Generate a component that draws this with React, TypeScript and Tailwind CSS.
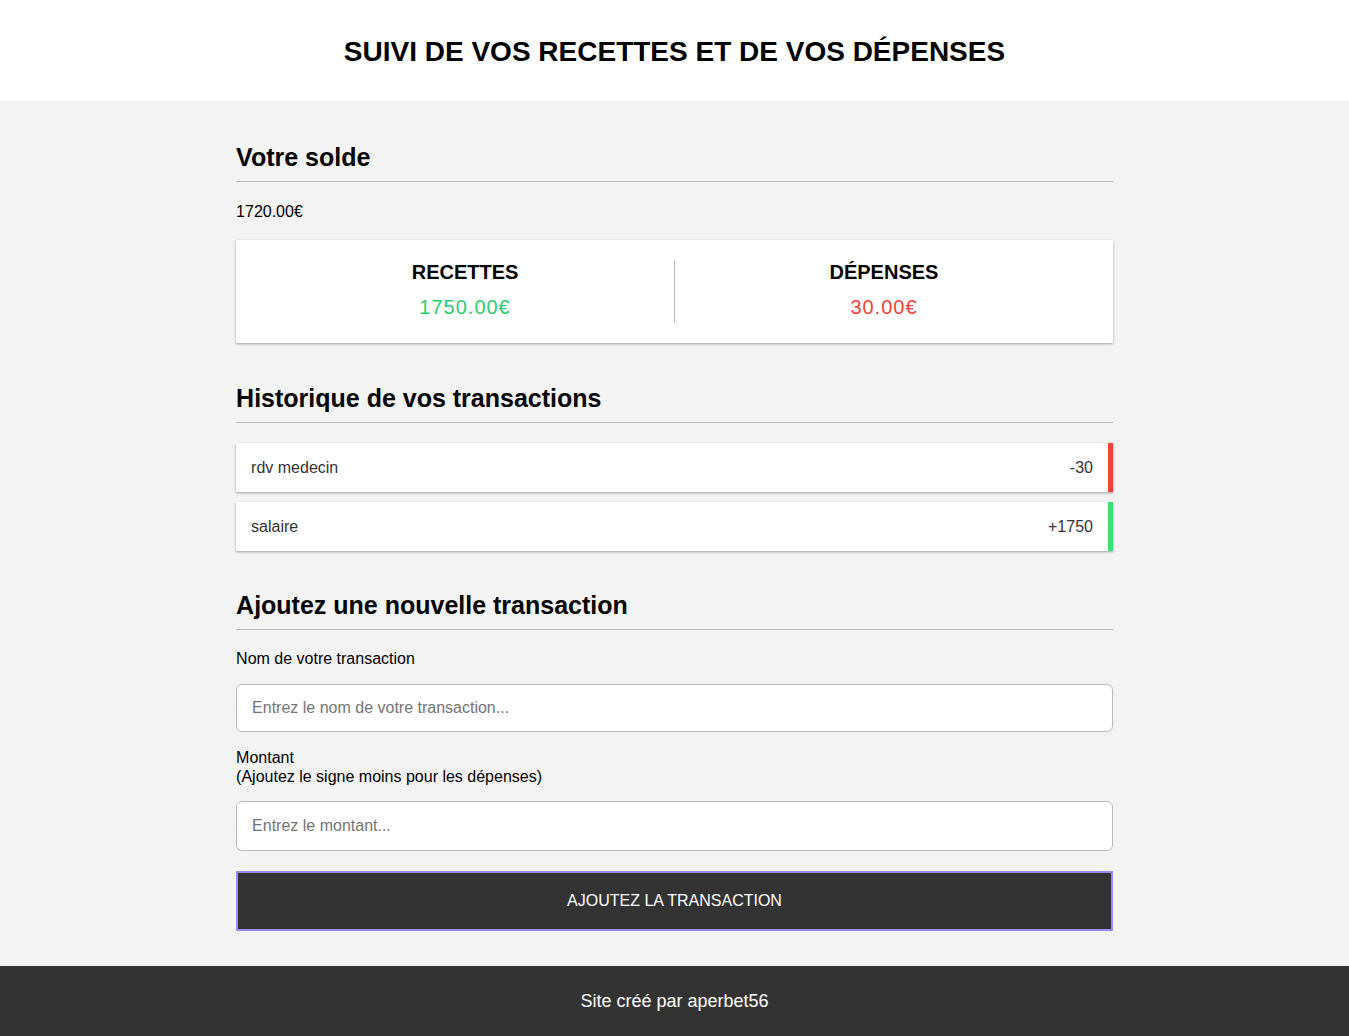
import React, { ReactElement } from "react";

const transactions = [
  { id: 1, text: "rdv medecin", amount: -30 },
  { id: 2, text: "salaire", amount: 1750 },
];

const SectionTitle = ({ children }: { children: React.ReactNode }): ReactElement => (
  <h3 className="border-b border-[#bbb] pb-[10px] text-[25px] font-bold leading-[28px] text-black">
    {children}
  </h3>
);

const App = (): ReactElement => {
  return (
    <div className="min-h-screen bg-[#f3f3f3] font-['Liberation_Sans',Arial,sans-serif] text-black">
      <header className="flex h-[101px] items-center justify-center bg-white pt-[2px]">
        <h1 className="text-[28px] font-bold leading-8">SUIVI DE VOS RECETTES ET DE VOS DÉPENSES</h1>
      </header>

      <main className="mx-auto w-[65%] pb-[35px] pt-[42px]">
        <SectionTitle>Votre solde</SectionTitle>
        <p className="mt-[21px] text-base leading-[18px]">1720.00€</p>

        <div className="mt-[19px] flex bg-white p-[20px] shadow-[0_1px_3px_rgba(0,0,0,0.12),0_1px_2px_rgba(0,0,0,0.24)]">
          <div className="flex flex-1 flex-col items-center border-r border-[#bbb]">
            <h4 className="text-[20px] font-bold leading-[24px]">RECETTES</h4>
            <p className="mt-[8px] text-[20px] leading-[31px] tracking-[1px] text-[#2ecc71]">1750.00€</p>
          </div>
          <div className="flex flex-1 flex-col items-center">
            <h4 className="text-[20px] font-bold leading-[24px]">DÉPENSES</h4>
            <p className="mt-[8px] text-[20px] leading-[31px] tracking-[1px] text-[#f4433a]">30.00€</p>
          </div>
        </div>

        <div className="mt-[41px]">
          <SectionTitle>Historique de vos transactions</SectionTitle>
        </div>
        <ul className="mt-[20px] flex flex-col gap-[10px]">
          {transactions.map(t => (
            <li
              key={t.id}
              className={`flex h-[49px] items-center justify-between border-r-[5px] bg-white pl-[15px] pr-[15px] text-base text-[#333] shadow-[0_1px_3px_rgba(0,0,0,0.12),0_1px_2px_rgba(0,0,0,0.24)] ${
                t.amount < 0 ? "border-[#f4433a]" : "border-[#3ae374]"
              }`}
            >
              <span>{t.text}</span>
              <span>{t.amount < 0 ? t.amount : `+${t.amount}`}</span>
            </li>
          ))}
        </ul>

        <div className="mt-[40px]">
          <SectionTitle>Ajoutez une nouvelle transaction</SectionTitle>
        </div>
        <form className="mt-[20px]" onSubmit={e => e.preventDefault()}>
          <label className="block text-base leading-[18px]">Nom de votre transaction</label>
          <input
            type="text"
            placeholder="Entrez le nom de votre transaction..."
            className="mt-[16px] block h-[48px] w-full rounded-[6px] border border-[#bbb] bg-white px-[15px] text-base placeholder:text-[#757575]"
          />
          <label className="mt-[16px] block text-base leading-[19px]">
            Montant <br />
            (Ajoutez le signe moins pour les dépenses)
          </label>
          <input
            type="text"
            placeholder="Entrez le montant..."
            className="mt-[15px] block h-[50px] w-full rounded-[6px] border border-[#bbb] bg-white px-[15px] text-base placeholder:text-[#757575]"
          />
          <button className="mt-[20px] block h-[60px] w-full border-2 border-[#9c88ff] bg-[#333] text-base text-white">
            AJOUTEZ LA TRANSACTION
          </button>
        </form>
      </main>

      <footer className="flex h-[70px] items-center justify-center bg-[#333] text-[18px] text-white">
        Site créé par aperbet56
      </footer>
    </div>
  );
};

export default App;
